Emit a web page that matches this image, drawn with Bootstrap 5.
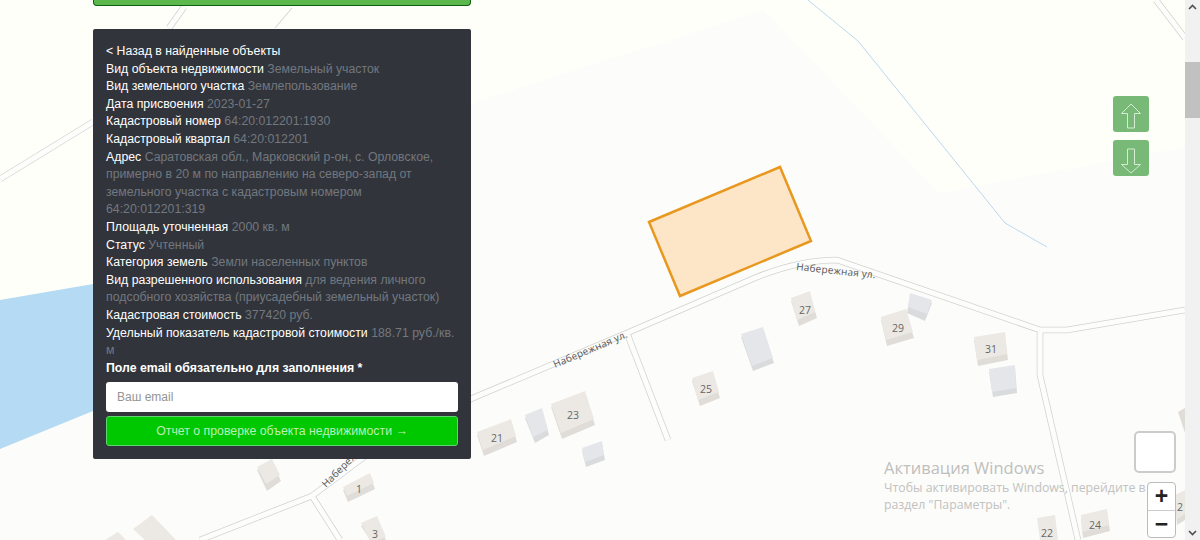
<!DOCTYPE html>
<html lang="ru">
<head>
    <meta charset="UTF-8">
    <meta name="viewport" content="width=device-width, initial-scale=1.0">
    <link href="https://cdn.jsdelivr.net/npm/bootstrap@5.3.3/dist/css/bootstrap.min.css" rel="stylesheet">
    <script src="https://cdn.jsdelivr.net/npm/bootstrap@5.3.3/dist/js/bootstrap.bundle.min.js"></script>
    <title>Проверка объекта недвижимости</title>
    <style>
        html, body{height: 540px; overflow: hidden;}
        body{background: #fcfcfa; font-family: "Liberation Sans", Arial, sans-serif; font-size: 12.3px;}
        .map-stage{position: relative; height: 540px; width: 1185px; overflow: hidden;}
        .map-canvas{position: absolute; left: 0; top: 0;}
        .road-edge{fill: none; stroke: #d2d2cf; stroke-width: 6.5; stroke-linejoin: round;}
        .road-fill{fill: none; stroke: #fdfdfb; stroke-width: 5; stroke-linejoin: round;}
        .bld-top{fill: #ece9e4;}
        .bld-side{fill: #e0ddd8;}
        .bld-gray{fill: #e4e6ea;}
        .bld-gray-side{fill: #dadbdd;}
        .bld-num{font-family: "Open Sans", sans-serif; font-size: 10.5px; fill: #666; text-anchor: middle;}
        .road-name{font-family: "Open Sans", sans-serif; font-size: 10px; fill: #555; letter-spacing: .2px;}
        .side-col{position: relative; width: 378px; margin-left: 93px;}
        .top-stub{height: 6px; margin-bottom: 23px; background: #5cb84c; border: 1px solid #0d5f12; border-top: 0; border-radius: 0 0 4px 4px;}
        .info-box{background: #31343a; color: #fff; padding: 14px 13px 13px; border-radius: 2px; line-height: 17.6px;}
        .info-box a{color: #fff; text-decoration: none;}
        .info-box .val{color: #717880;}
        .mail-label{font-weight: 700;}
        .mail-input.form-control{height: 30px; font-size: 12px; padding: 0 11px; border-radius: 3px; margin-top: 5px; border: 0;}
        .mail-input::placeholder{color: #949494;}
        .report-btn.btn{height: 30px; width: 100%; margin-top: 4px; padding: 0; font-size: 12.3px; background: #00c800; color: #b8f0b8; border: 1px solid #5fd36f; border-radius: 3px;}
        .floor-btn{position: absolute; left: 1113px; width: 36px; height: 36px; background: #78b978; border-radius: 3px;}
        .floor-up{top: 96px;}
        .floor-down{top: 140px;}
        .floor-btn svg{display: block;}
        .layer-box{position: absolute; left: 1134px; top: 431px; width: 42px; height: 42px; background: #fff; border: 2px solid #ccc; border-radius: 5px;}
        .zoom-box{position: absolute; left: 1147px; top: 482px; width: 29px; height: 56px; background: #fff; border: 1px solid #bbb; border-radius: 4px;}
        .zoom-box div{height: 27px; display: flex; align-items: center; justify-content: center; font-size: 23px; font-weight: 700; color: #222; line-height: 1;}
        .zoom-box div + div{border-top: 1px solid #ccc;}
        .win-mark{position: absolute; left: 884px; top: 457px; color: #c2c2c0; font-family: "Open Sans", sans-serif; font-size: 12.3px; line-height: 17px; white-space: nowrap;}
        .win-mark .win-title{font-size: 16.5px; line-height: 22px; color: #bfbfbd;}
        .fake-scroll{width: 15px; height: 540px; background: #f1f1f1; position: relative;}
        .fake-thumb{position: absolute; left: 0; top: 62px; width: 15px; height: 56px; background: #c1c1c1;}
        .fake-scroll svg{position: absolute; left: 3px;}
    </style>
</head>
<body class="d-flex">
    <div class="map-stage">
        <!-- map -->
        <svg class="map-canvas" width="1185" height="540" viewBox="0 0 1185 540">
            <rect width="1185" height="540" fill="#fcfcfa"/>
            <polygon points="0,0 1185,0 1185,147 939,193 764,10 480,100 93,285 0,300" fill="#fffffa"/>
            <polygon points="0,300 93,284 200,270 200,370 93,411 0,449" fill="#b5daf3"/>
            <polyline points="808,0 858,41 1005,223 1047,247" fill="none" stroke="#bcd8ee" stroke-width="1"/>

            <path class="road-edge" d="M0,179 L93,122 M184,7 L169,28 M1156,0 L1185,38 M200,540 L312,496 L400,430 L480,395 L627,333 L757,277 Q800,260 837,260 L1040,330 L1067,330 L1185,310 M312,496 L340,540 M627,333 L668,440 M1040,330 L1040,375 L1078,540"/>
            <path class="road-fill" d="M0,179 L93,122 M184,7 L169,28 M1156,0 L1185,38 M200,540 L312,496 L400,430 L480,395 L627,333 L757,277 Q800,260 837,260 L1040,330 L1067,330 L1185,310 M312,496 L340,540 M627,333 L668,440 M1040,330 L1040,375 L1078,540"/>
            <line x1="292" y1="8" x2="275" y2="28" stroke="#cfcfcc"/>

            <polygon points="649,222 780,167 811,241 680,296" fill="#fde6c8" stroke="#e8981f" stroke-width="2.5"/>

            <text class="road-name" transform="translate(796,270) rotate(6)">Набережная ул.</text>
            <text class="road-name" transform="translate(555,368) rotate(-23)">Набережная ул.</text>
            <text class="road-name" transform="translate(326,488) rotate(-45)">Набережная ул.</text>

            <polygon class="bld-side" points="791,301 810,294 817,318 799,326"/><polygon class="bld-top" points="791,298 810,291 815,312 797,320"/><text class="bld-num" x="805" y="314">27</text>
            <polygon class="bld-gray-side" points="741,337 763,330 774,363 753,371"/><polygon class="bld-gray" points="741,334 763,327 773,358 752,366"/>
            <polygon class="bld-side" points="692,381 713,374 720,398 700,406"/><polygon class="bld-top" points="692,378 713,371 719,392 698,400"/><text class="bld-num" x="706" y="393">25</text>
            <polygon class="bld-side" points="551,407 585,394 595,425 562,439"/><polygon class="bld-top" points="551,404 585,391 594,419 561,433"/><text class="bld-num" x="573" y="419">23</text>
            <polygon class="bld-side" points="477,435 511,422 517,442 484,456"/><polygon class="bld-top" points="477,432 511,419 516,436 483,450"/><text class="bld-num" x="497" y="442">21</text>
            <polygon class="bld-gray-side" points="525,418 542,411 549,435 535,443"/><polygon class="bld-gray" points="525,415 542,408 548,430 533,437"/>
            <polygon class="bld-gray-side" points="582,451 602,444 605,460 586,467"/><polygon class="bld-gray" points="582,448 602,441 604,455 585,462"/>
            <polygon class="bld-side" points="257,470 272,462 281,481 267,491"/><polygon class="bld-top" points="257,467 272,459 280,475 266,484"/>
            <polygon class="bld-side" points="343,490 370,476 375,489 348,502"/><polygon class="bld-top" points="343,487 370,473 374,483 347,496"/><text class="bld-num" x="359" y="493">1</text>
            <polygon class="bld-side" points="361,526 377,519 387,543 372,543"/><polygon class="bld-top" points="361,523 377,516 386,537 371,543"/><text class="bld-num" x="375" y="538">3</text>
            <polygon class="bld-top" points="133,529 152,515 176,540 145,540"/>
            <polygon class="bld-top" points="105,540 118,532 126,540"/>
            <polygon class="bld-gray-side" points="910,296 932,303 925,321 907,313"/><polygon class="bld-gray" points="910,293 932,300 927,314 908,307"/>
            <polygon class="bld-side" points="881,320 906,312 914,338 887,346"/><polygon class="bld-top" points="881,317 906,309 913,332 886,340"/><text class="bld-num" x="898" y="332">29</text>
            <polygon class="bld-side" points="974,340 1005,335 1008,360 978,366"/><polygon class="bld-top" points="974,337 1005,332 1007,354 977,360"/><text class="bld-num" x="991" y="353">31</text>
            <polygon class="bld-gray-side" points="989,372 1015,368 1017,393 993,397"/><polygon class="bld-gray" points="989,369 1015,365 1016,388 992,392"/>
            <polygon class="bld-side" points="1178,412 1185,408 1185,433"/>
            <polygon class="bld-side" points="1175,498 1185,493 1185,520 1177,525"/><polygon class="bld-top" points="1175,495 1185,490 1185,514 1177,519"/><text class="bld-num" x="1180" y="511">2</text>
            <polygon class="bld-top" points="1037,518 1055,515 1058,540 1040,540"/><text class="bld-num" x="1047" y="537">22</text>
            <polygon class="bld-side" points="1081,518 1107,512 1110,531 1083,538"/><polygon class="bld-top" points="1081,515 1107,509 1109,525 1082,532"/><text class="bld-num" x="1095" y="529">24</text>
        </svg>

        <!-- left column -->
        <div class="side-col">
            <div class="top-stub"></div>
            <div class="info-box">
                <div><a href="#">&lt; Назад в найденные объекты</a></div>
                <div>Вид объекта недвижимости <span class="val">Земельный участок</span></div>
                <div>Вид земельного участка <span class="val">Землепользование</span></div>
                <div>Дата присвоения <span class="val">2023-01-27</span></div>
                <div>Кадастровый номер <span class="val">64:20:012201:1930</span></div>
                <div>Кадастровый квартал <span class="val">64:20:012201</span></div>
                <div>Адрес <span class="val">Саратовская обл., Марковский р-он, с. Орловское, примерно в 20 м по направлению на северо-запад от земельного участка с кадастровым номером 64:20:012201:319</span></div>
                <div>Площадь уточненная <span class="val">2000 кв. м</span></div>
                <div>Статус <span class="val">Учтенный</span></div>
                <div>Категория земель <span class="val">Земли населенных пунктов</span></div>
                <div>Вид разрешенного использования <span class="val">для ведения личного подсобного хозяйства (приусадебный земельный участок)</span></div>
                <div>Кадастровая стоимость <span class="val">377420 руб.</span></div>
                <div>Удельный показатель кадастровой стоимости <span class="val">188.71 руб./кв. м</span></div>
                <div class="mail-label">Поле email обязательно для заполнения *</div>
                <input class="form-control mail-input" type="text" placeholder="Ваш email">
                <button class="btn report-btn" type="button">Отчет о проверке объекта недвижимости →</button>
            </div>
        </div>

        <!-- map controls -->
        <div class="floor-btn floor-up">
            <svg width="36" height="36" viewBox="0 0 36 36"><path d="M18 8 L27.5 17.5 L21.5 17.5 L21.5 32 L14.5 32 L14.5 17.5 L8.5 17.5 Z" fill="none" stroke="#d5ecd3" stroke-width="1"/></svg>
        </div>
        <div class="floor-btn floor-down">
            <svg width="36" height="36" viewBox="0 0 36 36"><path d="M18 33 L27.5 24.5 L21.5 24.5 L21.5 9 L14.5 9 L14.5 24.5 L8.5 24.5 Z" fill="none" stroke="#d5ecd3" stroke-width="1"/></svg>
        </div>
        <div class="layer-box"></div>
        <div class="zoom-box">
            <div>+</div>
            <div>−</div>
        </div>
        <div class="win-mark">
            <div class="win-title">Активация Windows</div>
            <div>Чтобы активировать Windows, перейдите в</div>
            <div>раздел "Параметры".</div>
        </div>
    </div>

    <div class="fake-scroll">
        <svg style="top:4px" width="9" height="6" viewBox="0 0 9 6"><path d="M1 5 L4.5 1.5 L8 5" fill="none" stroke="#505050" stroke-width="1.6"/></svg>
        <div class="fake-thumb"></div>
        <svg style="bottom:4px" width="9" height="6" viewBox="0 0 9 6"><path d="M1 1 L4.5 4.5 L8 1" fill="none" stroke="#505050" stroke-width="1.6"/></svg>
    </div>
</body>
</html>
